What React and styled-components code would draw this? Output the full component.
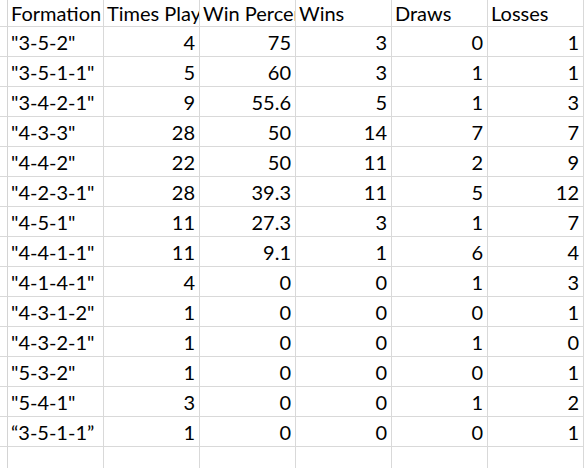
import styled, { createGlobalStyle } from 'styled-components';

const GlobalStyle = createGlobalStyle`
    body {
        margin: 0;
        background: #fff;
        font-family: Lato, "Liberation Sans", sans-serif;
    }
`;

const Sheet = styled.div`
    display: grid;
    grid-template-columns: 8px repeat(6, 96px);
    grid-template-rows: 28px;
    grid-auto-rows: 30px;
    width: 587px;
    height: 469px;
    overflow: hidden;
    margin-top: -1px;
`;

const Gutter = styled.div`
    border-right: 1px solid #d4d4d4;
    border-bottom: 1px solid #d9d9d9;
    box-sizing: border-box;
`;

const Cell = styled.div`
    box-sizing: border-box;
    border-right: 1px solid #d9d9d9;
    border-bottom: 1px solid #d9d9d9;
    display: flex;
    align-items: center;
    justify-content: ${(props) => (props.num ? 'flex-end' : 'flex-start')};
    padding: 0 ${(props) => (props.num ? '4px' : '0')} 0 ${(props) => (props.num ? '0' : '3px')};
    font-size: 20px;
    color: #000;
    white-space: nowrap;
    overflow: hidden;
`;

const headers = ['Formation', 'Times Played', 'Win Percentage', 'Wins', 'Draws', 'Losses'];

const rows = [
    ['"3-5-2"', 4, 75, 3, 0, 1],
    ['"3-5-1-1"', 5, 60, 3, 1, 1],
    ['"3-4-2-1"', 9, 55.6, 5, 1, 3],
    ['"4-3-3"', 28, 50, 14, 7, 7],
    ['"4-4-2"', 22, 50, 11, 2, 9],
    ['"4-2-3-1"', 28, 39.3, 11, 5, 12],
    ['"4-5-1"', 11, 27.3, 3, 1, 7],
    ['"4-4-1-1"', 11, 9.1, 1, 6, 4],
    ['"4-1-4-1"', 4, 0, 0, 1, 3],
    ['"4-3-1-2"', 1, 0, 0, 0, 1],
    ['"4-3-2-1"', 1, 0, 0, 1, 0],
    ['"5-3-2"', 1, 0, 0, 0, 1],
    ['"5-4-1"', 3, 0, 0, 1, 2],
    ['\u201C3-5-1-1\u201D', 1, 0, 0, 0, 1],
];

const App = () => (
    <>
        <GlobalStyle />
        <Sheet>
            <Gutter />
            {headers.map((h) => (
                <Cell key={h}>{h}</Cell>
            ))}
            {rows.map((row, i) => (
                <>
                    <Gutter key={'g' + i} />
                    {row.map((v, j) => (
                        <Cell key={i + '-' + j} num={j > 0}>
                            {v}
                        </Cell>
                    ))}
                </>
            ))}
            <Gutter />
            {headers.map((h) => (
                <Cell key={'e' + h} />
            ))}
        </Sheet>
    </>
);

export default App;
